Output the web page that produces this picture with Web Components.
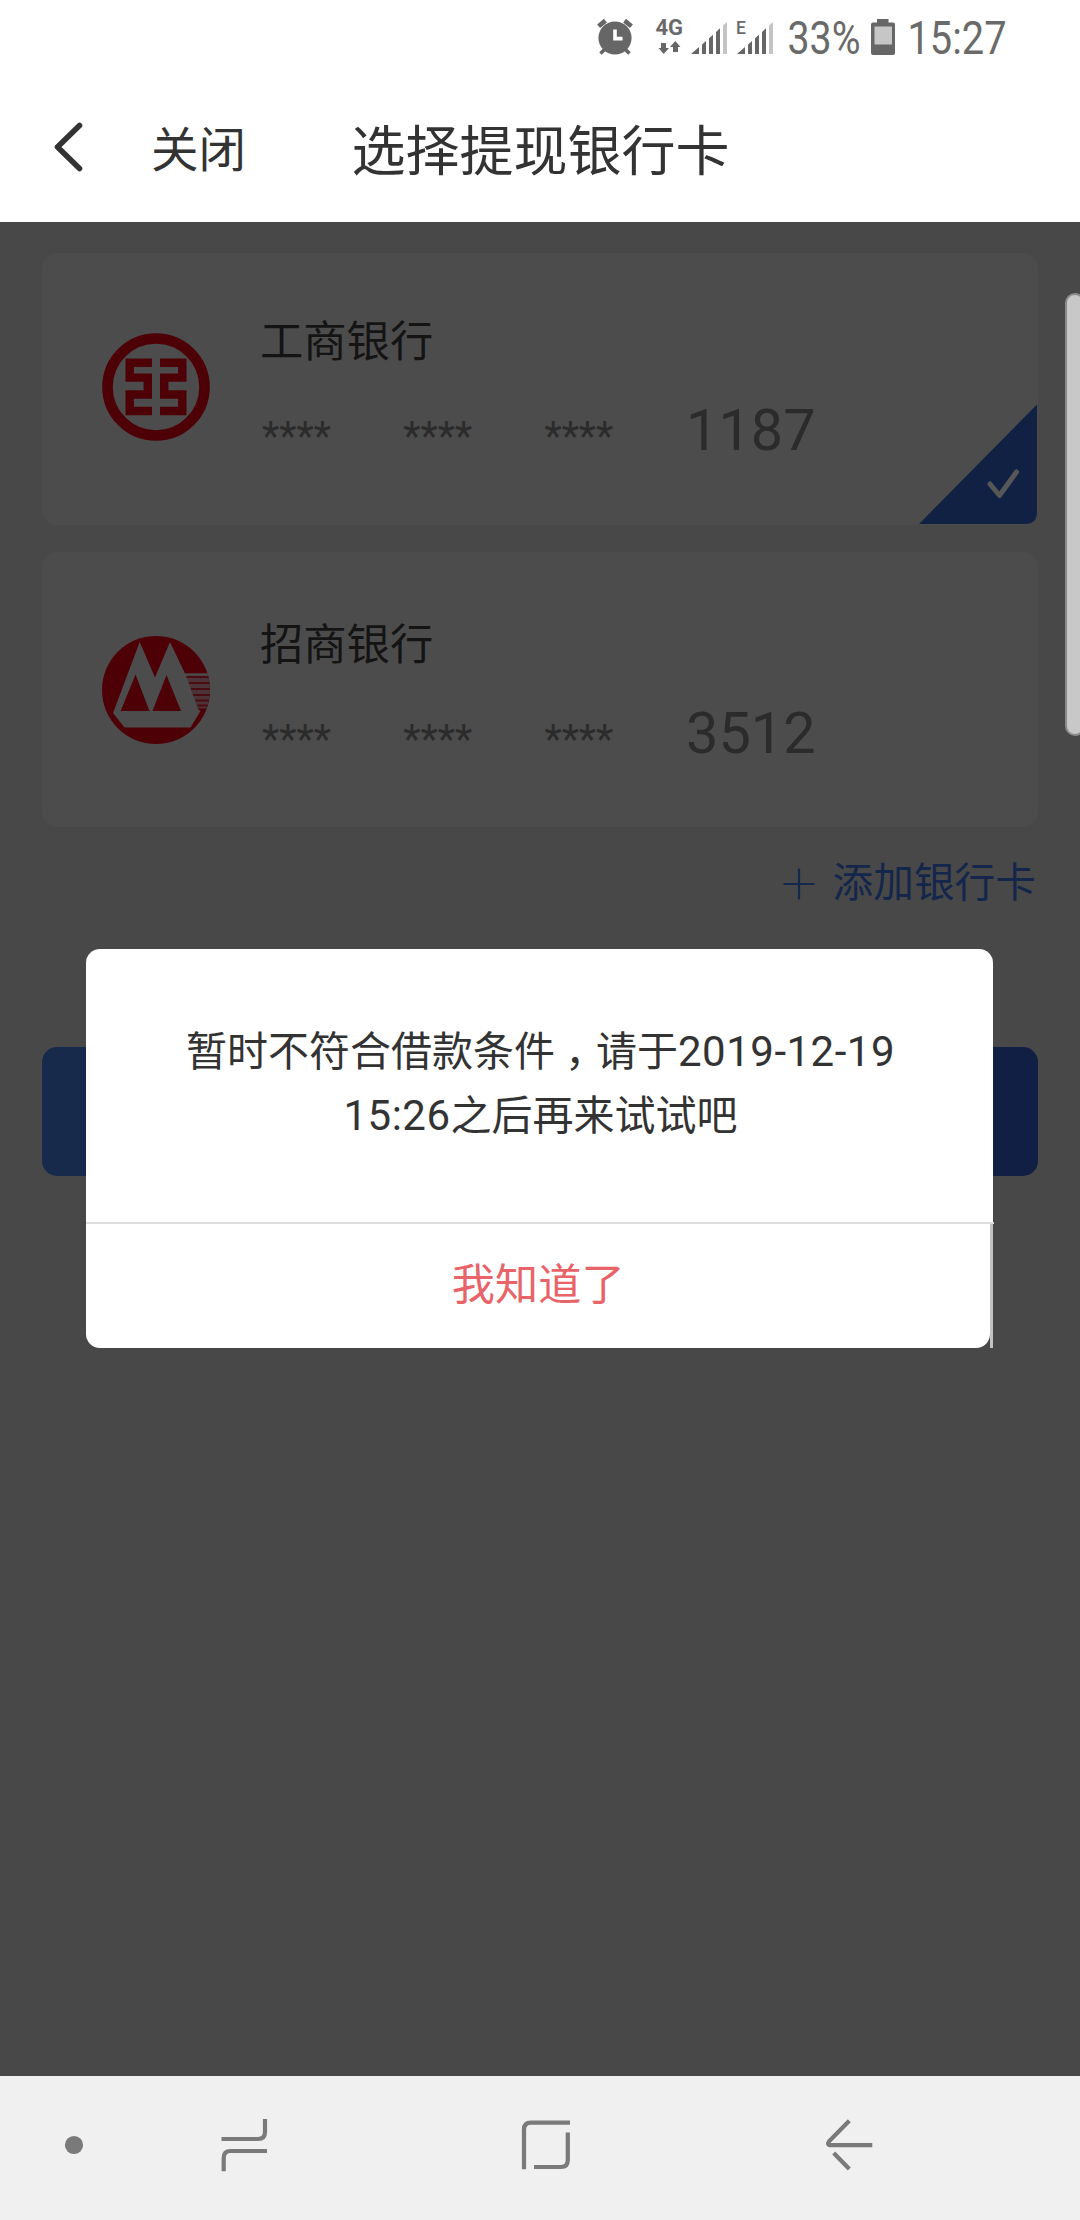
<!DOCTYPE html>
<html lang="zh-CN">
<head>
<meta charset="utf-8">
<title>选择提现银行卡</title>
<style>
html,body{margin:0;padding:0}
body{width:1080px;height:2220px;overflow:hidden;background:#484848;font-family:Roboto,"Noto Sans CJK SC",sans-serif}
</style>
</head>
<body>
<bank-app></bank-app>
<script>
const define = (name, html) => {
  const tpl = document.createElement('template');
  tpl.innerHTML = html;
  customElements.define(name, class extends HTMLElement {
    constructor() {
      super();
      this.attachShadow({mode: 'open'}).appendChild(tpl.content.cloneNode(true));
    }
  });
};

define('status-bar', `
<style>
:host{display:flex;justify-content:flex-end;height:78px;padding-right:60px;background:#fff}
svg{display:block;overflow:visible}
text{font-family:Roboto,sans-serif;fill:#6a6a6a}
</style>
<svg width="440" height="78" viewBox="580 0 440 78" fill="#666">
  <circle cx="615" cy="38" r="16.6"/>
  <path d="M598.6 26.2 605.4 20.6M631.4 26.2 624.6 20.6" stroke="#666" stroke-width="4.6"/>
  <path d="M605 49 600.5 53.5M625 49 629.500 53.500" stroke="#666" stroke-width="3.6"/>
  <path d="M615 29.500V38.600H622.500" stroke="#fff" stroke-width="3.6" fill="none"/>
  <text x="655.500" y="34.800" font-size="22" font-weight="700">4G</text>
  <path d="M661 43H666V48H669L663.700 54 658.500 48H661ZM673 52V47H670L675.300 41 680.500 47H678V52Z"/>
  <path d="M691 54 699 47V54ZM702 54V44.500L706 41V54ZM709 54V38.300L713 34.800V54ZM716 54V32L720 28.200V54Z"/>
  <path d="M723 54V25.500L727 22V54Z" fill="#c4c4c4"/>
  <path d="M737 54 745 47V54ZM748 54V44.500L752 41V54ZM755 54V38.300L759 34.800V54ZM762 54V32L766 28.200V54Z"/>
  <path d="M769 54V25.500L773 22V54Z" fill="#c4c4c4"/>
  <text x="736" y="34" font-size="17.500" font-weight="500">E</text>
  <text x="787.500" y="54.300" font-size="46" textLength="73" lengthAdjust="spacingAndGlyphs">33%</text>
  <path d="M877 19H888.500V22.500H893Q895 22.500 895 24.500V53Q895 55 893 55H873Q871 55 871 53V24.500Q871 22.500 873 22.500H877Z"/>
  <path d="M874.500 26.500H892V44.500H874.500Z" fill="#c6c6c6"/>
  <text x="907.500" y="54.300" font-size="46" textLength="99" lengthAdjust="spacingAndGlyphs">15:27</text>
</svg>`);

define('title-bar', `
<style>
:host{display:flex;align-items:center;height:144px;padding:0 0 0 50px;box-sizing:border-box;background:#fff;color:#333}
svg{display:block;margin-bottom:6px}
.close{font-size:47.5px;line-height:60px;margin:2px 0 0 61px;width:200.500px}
.title{font-size:54px;line-height:70px;margin-top:5px}
</style>
<svg width="40" height="60" viewBox="50 117 40 60" fill="none" stroke="#333" stroke-width="5.600" stroke-linecap="round" stroke-linejoin="round"><path d="M79.500 125.500 57.500 147 79.500 168.500"/></svg>
<span class="close"><slot name="close"></slot></span><span class="title"><slot></slot></span>`);

define('icbc-logo', `
<style>:host{display:block}svg{display:block}</style>
<svg width="108" height="108" viewBox="0 0 108 108" fill="none" stroke="#4e0007">
<circle cx="54" cy="54" r="48.500" stroke-width="10.600"/>
<path stroke-width="8.400" d="M50 29.700H27.700V44.600H45.800V61.500H27.700V78H50M58 29.700H80.300V44.600H62.200V61.500H80.300V78H58"/>
</svg>`);

define('cmb-logo', `
<style>:host{display:block}svg{display:block}</style>
<svg width="108" height="108" viewBox="0 0 108 108">
<clipPath id="disc"><circle cx="54" cy="54" r="54"/></clipPath>
<g clip-path="url(#disc)">
<path fill="#4e0007" d="M0 0H108V108H0Z"/>
<path fill="#4b3337" d="M82 37.500H108V72.500H95Z"/>
<path fill="#4c4c4c" d="M11 77 37.700 6 53 41.500 68 6 83 37.500H108V39.500H84L96 73 98.500 75 88.500 91.500H22.500Z"/>
<path fill="#4e0007" d="M18.700 75 33.500 38.500 47.500 75ZM50.500 75 64.500 39 79 75Z"/>
<path stroke="#4a0c13" stroke-width="2" d="M84.500 41H108M87 47H108M89 53H108M91 59H108M93.500 64.500H108M95.500 69.500H108"/>
</g></svg>`);

define('card-number', `
<style>
:host{display:flex;align-items:baseline;gap:72.300px;color:#2b2b2b;font-size:40px;line-height:60px}
.last{font-size:57.600px;line-height:60px;margin-left:.5px}
</style>
<span>****</span><span>****</span><span>****</span><span class="last"><slot></slot></span>`);

define('bank-card', `
<style>
:host{display:flex;box-sizing:border-box;position:relative;background:#4c4c4c;border-radius:15px;height:272px;padding:79.500px 0 0 60px}
:host([second]){height:275px;padding-top:84px}
.info{display:flex;flex-direction:column;margin-left:50px;margin-top:-20px}
.name{font-size:43.300px;line-height:60px;color:#141414;height:60px}
card-number{margin:28px 0 0 2px}
.mark{display:none;position:absolute;right:0;bottom:0}
:host([checked]) .mark{display:block}
</style>
<slot name="logo"></slot>
<div class="info"><span class="name"><slot name="name"></slot></span><card-number><slot></slot></card-number></div>
<svg class="mark" width="119" height="121" viewBox="919 404 119 121"><path fill="#102144" d="M1037 404.500V512Q1037 524 1025 524H919Z"/><path d="M990 484 999.500 495.500 1016.500 472" fill="none" stroke="#575757" stroke-width="5" stroke-linecap="round" stroke-linejoin="round"/></svg>`);

define('add-card', `
<style>
:host{display:flex;justify-content:flex-end;align-items:center;gap:17.500px;height:60px;color:#14264b;font-size:40.700px;line-height:60px}
svg{display:block;margin-top:3px}
span{margin-top:2px}
</style>
<svg width="32" height="32" viewBox="0 0 32 32" stroke="#14264b" stroke-width="2.200"><path d="M16 .5V31.500M.5 16H31.500"/></svg>
<span><slot></slot></span>`);

define('submit-button', `
<style>:host{display:block;height:129px;border-radius:15px;background:linear-gradient(90deg,#172a4c,#121f45)}</style>`);

define('notice-dialog', `
<style>
:host{display:flex;flex-direction:column;width:907px}
.msg{box-sizing:border-box;height:273px;padding:71px 59px 0 61px;background:#fff;border-radius:14px 14px 0 0;text-align:center;font-size:41px;line-height:63px;color:#333}
.foot{display:flex;width:908px;height:126px;box-sizing:border-box;border-top:2px solid #ddd}
.ok{flex:none;width:903.500px;background:#fff;border-radius:0 0 14px 14px;text-align:center;font-size:43.200px;line-height:124px;color:#e86468;box-sizing:border-box;padding-left:1px}
.edge{width:3.500px;background:#c2c2c2}
</style>
<div class="msg"><slot></slot></div>
<div class="foot"><div class="ok"><slot name="action"></slot></div><div class="edge"></div></div>`);

define('nav-bar', `
<style>:host{display:flex;height:144px;background:#f0f0f0}svg{display:block}</style>
<svg width="1080" height="144" viewBox="0 2076 1080 144" fill="none" stroke="#7a7a7a" stroke-width="4.200">
<circle cx="74" cy="2145" r="9.100" fill="#7a7a7a" stroke="none"/>
<path d="M221.500 2139H258Q265 2139 265 2132V2119M267 2151H230.500Q223.700 2151 223.700 2158V2171.300"/>
<path d="M524 2169.300V2129.500Q524 2122.700 531 2122.700H570M567.800 2132.500V2160Q567.800 2167 561 2167H534"/>
<path d="M849.300 2120.800 829.300 2141Q826.300 2145.200 831 2145.200H872.300M833.700 2153 849.300 2169"/>
</svg>`);

define('bank-app', `
<style>
:host{display:flex;flex-direction:column;width:1080px;height:2220px;position:relative;background:#484848}
.main{flex:1;display:flex;flex-direction:column;padding:31px 42px 0}
bank-card[second]{margin-top:27px}
add-card{margin:25px 2px 0 0}
submit-button{margin-top:135px}
notice-dialog{position:absolute;left:86px;top:949px}
.handle{position:absolute;left:1065px;top:293px;width:20px;height:443px;box-sizing:border-box;background:#c8c8c8;border:2px solid #8b8b8b;border-radius:18px}
.clip{position:absolute;inset:0;overflow:hidden;pointer-events:none}
.comma{margin-left:10px;letter-spacing:-10px}
.num{font-size:42px;letter-spacing:.5px}
</style>
<status-bar></status-bar>
<title-bar><span slot="close">关闭</span>选择提现银行卡</title-bar>
<div class="main">
<bank-card checked><icbc-logo slot="logo"></icbc-logo><span slot="name">工商银行</span>1187</bank-card>
<bank-card second><cmb-logo slot="logo"></cmb-logo><span slot="name">招商银行</span>3512</bank-card>
<add-card>添加银行卡</add-card>
<submit-button></submit-button>
</div>
<nav-bar></nav-bar>
<notice-dialog>暂时不符合借款条件<span class="comma">，</span>请于<span class="num">2019-12-19</span><br><span class="num">15:26</span>之后再来试试吧<span slot="action">我知道了</span></notice-dialog>
<div class="clip"><div class="handle"></div></div>`);
</script>
</body>
</html>
